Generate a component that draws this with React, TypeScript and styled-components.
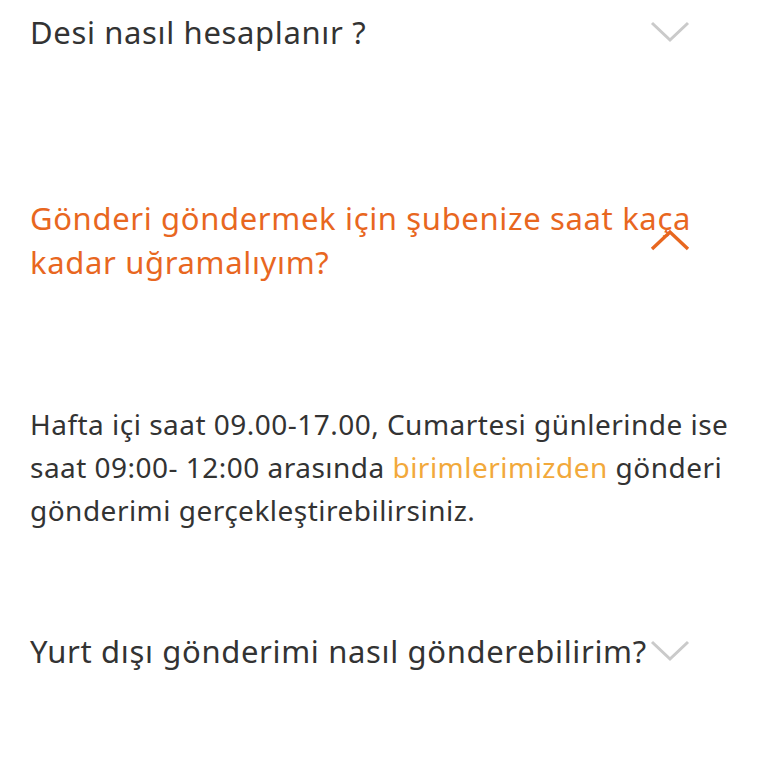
import React from "react";
import styled, { createGlobalStyle } from "styled-components";

const Global = createGlobalStyle`
  html, body { margin: 0; padding: 0; background: #ffffff; }
  body { font-family: "Noto Sans", "Open Sans", sans-serif; }
`;

const List = styled.div`
  display: flex;
  flex-direction: column;
  padding: 0 30px 0 30px;
  margin-top: -61px;
`;

const Item = styled.section<{ $open?: boolean }>`
  display: flex;
  flex-direction: column;
  padding: 71px 0 ${(p) => (p.$open ? "26px" : "71px")};
`;

const Header = styled.div`
  position: relative;
  display: flex;
  align-items: center;
  width: 662px;
`;

const Question = styled.h2<{ $open?: boolean }>`
  margin: 0;
  font-size: 31px;
  font-weight: 400;
  line-height: 44px;
  letter-spacing: 0.65px;
  color: ${(p) => (p.$open ? "#e8671f" : "#333333")};
`;

const Chevron = styled.svg`
  position: absolute;
  right: 2px;
  top: 50%;
  transform: translateY(-50%);
  width: 40px;
  height: 22px;
`;

const Answer = styled.p`
  margin: 119px 0 0;
  width: 708px;
  font-size: 28px;
  line-height: 43px;
  letter-spacing: 0.48px;
  color: #333333;
`;

const Link = styled.a`
  color: #f2a93b;
  text-decoration: none;
`;

function Icon({ open }: { open?: boolean }) {
  return (
    <Chevron viewBox="0 0 40 22" fill="none">
      {open ? (
        <path d="M2 20 L20 3 L38 20" stroke="#e8671f" strokeWidth="3.4" />
      ) : (
        <path d="M2 2 L20 19 L38 2" stroke="#cacaca" strokeWidth="3" />
      )}
    </Chevron>
  );
}

export default function App() {
  return (
    <>
      <Global />
      <List>
        <Item>
          <Header>
            <Question>Desi nasıl hesaplanır ?</Question>
            <Icon />
          </Header>
        </Item>
        <Item $open>
          <Header>
            <Question $open>
              Gönderi göndermek için şubenize saat kaça kadar uğramalıyım?
            </Question>
            <Icon open />
          </Header>
          <Answer>
            Hafta içi saat 09.00-17.00, Cumartesi günlerinde ise saat 09:00- 12:00
            arasında <Link href="#">birimlerimizden</Link> gönderi gönderimi
            gerçekleştirebilirsiniz.
          </Answer>
        </Item>
        <Item>
          <Header>
            <Question>Yurt dışı gönderimi nasıl gönderebilirim?</Question>
            <Icon />
          </Header>
        </Item>
      </List>
    </>
  );
}
